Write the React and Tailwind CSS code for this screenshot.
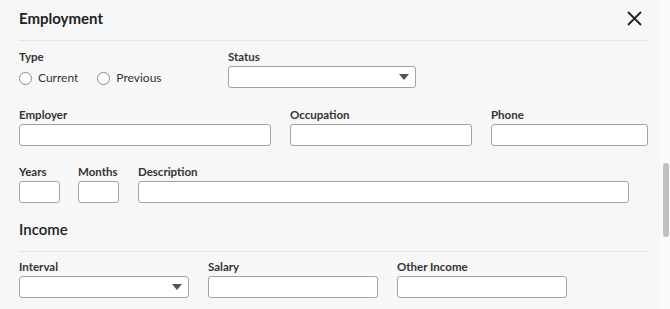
const font = { fontFamily: "Lato, 'Open Sans', sans-serif" };

function Label({ children }) {
  return <div className="h-[14px] leading-[14px] text-[11.5px] font-bold text-[#333]">{children}</div>;
}

function TextField({ label, width }) {
  return (
    <div className={width}>
      <Label>{label}</Label>
      <div className="mt-[2px] h-[22px] rounded-[3px] border border-[#a3a3a3] bg-white" />
    </div>
  );
}

function SelectField({ label, width }) {
  return (
    <div className={width}>
      <Label>{label}</Label>
      <div className="mt-[2px] h-[22px] rounded-[3px] border border-[#a3a3a3] bg-white flex items-center justify-end pr-[6px]">
        <svg width="10" height="6" viewBox="0 0 10 6">
          <path d="M0 0 L10 0 L5 6 Z" fill="#555" />
        </svg>
      </div>
    </div>
  );
}

function Radio({ label }) {
  return (
    <label className="flex items-center gap-[6px] text-[12px] text-[#333]">
      <span className="w-[13px] h-[13px] rounded-full border border-[#8a8a8a] bg-white" />
      {label}
    </label>
  );
}

export default function App() {
  return (
    <div className="w-[670px] h-[309px] flex bg-[#fafafa] overflow-hidden" style={font}>
      <main className="w-[660px] bg-[#f7f7f7] pl-[19px] pr-[12px]">
        <div className="flex items-center justify-between h-[36px] pt-[1px]">
          <h1 className="text-[15px] font-bold text-[#222]">Employment</h1>
          <svg width="15" height="15" viewBox="0 0 15 15" className="mr-[6px]">
            <path d="M1 1 L14 14 M14 1 L1 14" stroke="#222" strokeWidth="1.8" />
          </svg>
        </div>
        <div className="mt-[4px] border-t border-[#e6e6e6]" />

        <div className="mt-[9px] flex gap-[19px]">
          <div className="w-[190px]">
            <Label>Type</Label>
            <div className="mt-[5px] flex gap-[19px]">
              <Radio label="Current" />
              <Radio label="Previous" />
            </div>
          </div>
          <SelectField label="Status" width="w-[188px]" />
        </div>

        <div className="mt-[20px] flex gap-[19px]">
          <TextField label="Employer" width="w-[252px]" />
          <TextField label="Occupation" width="w-[182px]" />
          <TextField label="Phone" width="w-[157px]" />
        </div>

        <div className="mt-[19px] flex">
          <TextField label="Years" width="w-[41px]" />
          <TextField label="Months" width="w-[41px] ml-[18px]" />
          <TextField label="Description" width="w-[491px] ml-[19px]" />
        </div>

        <div className="mt-[10px] h-[32px] flex items-center">
          <h2 className="text-[15px] font-semibold text-[#222]">Income</h2>
        </div>
        <div className="mt-[6px] border-t border-[#e6e6e6]" />

        <div className="mt-[8px] flex gap-[19px]">
          <SelectField label="Interval" width="w-[170px]" />
          <TextField label="Salary" width="w-[170px]" />
          <TextField label="Other Income" width="w-[170px]" />
        </div>
      </main>
      <aside className="w-[10px] pl-[3px]">
        <div className="mt-[163px] w-[6px] h-[74px] rounded-full bg-[#c1c1c1]" />
      </aside>
    </div>
  );
}
